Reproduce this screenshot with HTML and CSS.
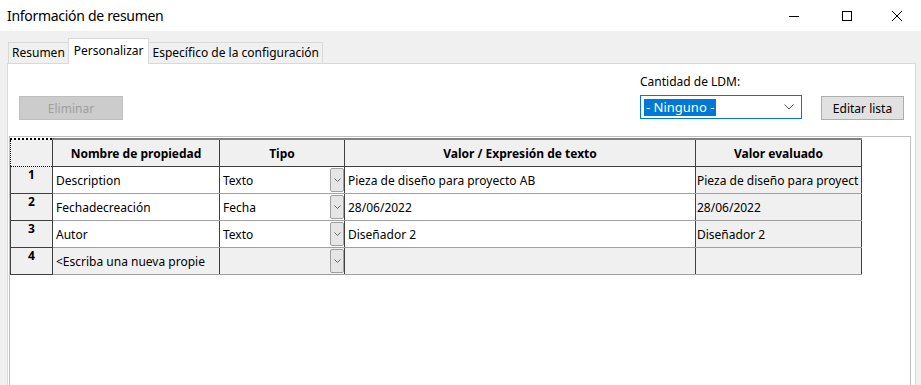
FILE: index.html
```html
<!DOCTYPE html>
<html>
<head>
    <title>Información de resumen</title>
    <meta name="viewport" content="width=device-width, initial-scale=1">
    <link rel="stylesheet" href="styles.css">
</head>
<body>
    <div class="titlebar">
        <div class="title">Información de resumen</div>
        <div class="controls">
            <span class="ctrl">
                <svg width="12" height="12" viewBox="0 0 12 12"><path d="M1 6.5h10" stroke="#000" stroke-width="1" fill="none"/></svg>
            </span>
            <span class="ctrl">
                <svg width="12" height="12" viewBox="0 0 12 12"><rect x="1.5" y="1.5" width="9" height="9" stroke="#000" stroke-width="1" fill="none"/></svg>
            </span>
            <span class="ctrl">
                <svg width="12" height="12" viewBox="0 0 12 12"><path d="M1 1l10 10M11 1L1 11" stroke="#000" stroke-width="1" fill="none"/></svg>
            </span>
        </div>
    </div>

    <div class="dialog">
        <div class="tabs">
            <div class="tab">Resumen</div>
            <div class="tab active">Personalizar</div>
            <div class="tab">Específico de la configuración</div>
        </div>
        <div class="panel">
            <div class="toolbar">
                <button type="button" class="btn" disabled>Eliminar</button>
                <div class="ldm">
                    <label class="ldm-label">Cantidad de LDM:</label>
                    <div class="ldm-row">
                        <div class="select">
                            <span class="sel-text">- Ninguno -</span>
                            <svg class="chev" width="10" height="6" viewBox="0 0 10 6"><path d="M0.5 0.5l4.5 4.5l4.5-4.5" stroke="#555" stroke-width="1" fill="none"/></svg>
                        </div>
                        <button type="button" class="btn">Editar lista</button>
                    </div>
                </div>
            </div>

            <div class="grid">
                <table class="props">
                    <colgroup>
                        <col class="c-num">
                        <col class="c-name">
                        <col class="c-type">
                        <col class="c-val">
                        <col class="c-eval">
                    </colgroup>
                    <thead>
                        <tr>
                            <th class="corner"></th>
                            <th>Nombre de propiedad</th>
                            <th>Tipo</th>
                            <th>Valor / Expresión de texto</th>
                            <th>Valor evaluado</th>
                        </tr>
                    </thead>
                    <tbody>
                        <tr>
                            <td class="num">1</td>
                            <td>Description</td>
                            <td class="type"><span>Texto</span><span class="drop"><svg width="7" height="4" viewBox="0 0 7 4"><path d="M0.5 0.5l3 3l3-3" stroke="#666" fill="none"/></svg></span></td>
                            <td>Pieza de diseño para proyecto AB</td>
                            <td class="eval">Pieza de diseño para proyect</td>
                        </tr>
                        <tr>
                            <td class="num">2</td>
                            <td>Fechadecreación</td>
                            <td class="type"><span>Fecha</span><span class="drop"><svg width="7" height="4" viewBox="0 0 7 4"><path d="M0.5 0.5l3 3l3-3" stroke="#666" fill="none"/></svg></span></td>
                            <td>28/06/2022</td>
                            <td class="eval">28/06/2022</td>
                        </tr>
                        <tr>
                            <td class="num">3</td>
                            <td>Autor</td>
                            <td class="type"><span>Texto</span><span class="drop"><svg width="7" height="4" viewBox="0 0 7 4"><path d="M0.5 0.5l3 3l3-3" stroke="#666" fill="none"/></svg></span></td>
                            <td>Diseñador 2</td>
                            <td class="eval">Diseñador 2</td>
                        </tr>
                        <tr class="new-row">
                            <td class="num">4</td>
                            <td>&lt;Escriba una nueva propie</td>
                            <td class="type"><span></span><span class="drop"><svg width="7" height="4" viewBox="0 0 7 4"><path d="M0.5 0.5l3 3l3-3" stroke="#666" fill="none"/></svg></span></td>
                            <td></td>
                            <td class="eval"></td>
                        </tr>
                    </tbody>
                </table>
            </div>
        </div>
    </div>
</body>
</html>
```

FILE: styles.css
```css
body {
    margin: 0;
    font-family: "Noto Sans", "Open Sans", sans-serif;
    font-size: 12px;
    color: #000;
    background: #f0f0f0;
    height: 385px;
    overflow: hidden;
}
.titlebar {
    height: 31px;
    background: #fff;
    display: flex;
    align-items: center;
    justify-content: space-between;
}
.title {
    font-size: 14px;
    letter-spacing: -0.3px;
    padding-left: 7px;
    padding-bottom: 1px;
}
.controls {
    display: flex;
}
.ctrl {
    width: 53px;
    height: 31px;
    display: flex;
    align-items: center;
    justify-content: center;
}
.ctrl:last-child {
    width: 48px;
}
.dialog {
    padding: 7px 5px 0 7px;
}
.tabs {
    display: flex;
    padding-left: 1px;
    height: 25px;
    align-items: flex-end;
}
.tab {
    height: 20px;
    line-height: 20px;
    padding: 0 3px;
    border: 1px solid #d9d9d9;
    border-bottom: none;
    margin-right: -1px;
    background: #f0f0f0;
}
.tab.active {
    height: 25px;
    line-height: 23px;
    background: #fff;
    position: relative;
    z-index: 1;
    margin-bottom: -1px;
    padding: 0 5px;
}
.panel {
    background: #fff;
    border: 1px solid #d9d9d9;
    border-bottom: none;
    height: 322px;
    padding: 0 2px 0 1px;
}
.toolbar {
    display: flex;
    justify-content: space-between;
    align-items: flex-start;
    padding: 9px 0 0 10px;
    height: 63px;
}
.btn {
    font-family: inherit;
    font-size: 12px;
    height: 24px;
    padding: 0;
    background: #e1e1e1;
    border: 1px solid #adadad;
    color: #000;
}
.btn[disabled] {
    margin-top: 23px;
    width: 104px;
    background: #cccccc;
    border-color: #bfbfbf;
    color: #a0a0a0;
}
.ldm {
    margin-right: 9px;
}
.ldm-label {
    display: block;
    height: 22px;
    line-height: 18px;
}
.ldm-row {
    display: flex;
    gap: 19px;
    align-items: flex-start;
}
.ldm-row .btn {
    width: 83px;
    margin-top: 1px;
}
.select {
    width: 162px;
    height: 24px;
    border: 1px solid #0078d7;
    display: flex;
    align-items: center;
    justify-content: space-between;
    padding: 0 7px 0 3px;
    box-sizing: border-box;
}
.sel-text {
    background: #0078d7;
    color: #fff;
    padding: 0 2px;
    line-height: 17px;
    font-size: 13px;
}
.grid {
    border-top: 1px solid #bfbfbf;
    border-left: 1px solid #bfbfbf;
    border-right: 1px solid #bfbfbf;
    height: 249px;
    margin-right: 2px;
    padding-top: 1px;
}
.props {
    border-collapse: collapse;
    table-layout: fixed;
    width: 851px;
}
.c-num { width: 42px; }
.c-name { width: 167px; }
.c-type { width: 125px; }
.c-val { width: 351px; }
.c-eval { width: 166px; }
.props th {
    background: #f0f0f0;
    font-weight: bold;
    height: 26px;
    border: 1px solid #404040;
    border-top: 2px solid #808080;
    text-align: center;
    padding: 0;
}
.props th.corner {
    border: 1px dotted #000;
    border-top: 2px dotted #000;
}
.props td {
    height: 26px;
    border-left: 1px solid #404040;
    border-right: 1px solid #404040;
    border-bottom: 1px solid #a0a0a0;
    padding: 0 0 0 3px;
    white-space: nowrap;
    overflow: hidden;
    background: #fff;
}
.props td.num {
    background: #f0f0f0;
    font-weight: bold;
    text-align: center;
    vertical-align: top;
    padding: 0;
    line-height: 16px;
    border-bottom: 1px solid #404040;
}
.props td.eval {
    background: #f0f0f0;
    padding-left: 1px;
}
.type {
    position: relative;
}
.drop {
    position: absolute;
    right: 0;
    top: 1px;
    bottom: 1px;
    width: 14px;
    background: #e6e6e6;
    border: 1px solid #a0a0a0;
    border-radius: 2px;
    display: flex;
    align-items: center;
    justify-content: center;
    box-sizing: border-box;
}
.new-row td {
    background: #f0f0f0;
}
```
